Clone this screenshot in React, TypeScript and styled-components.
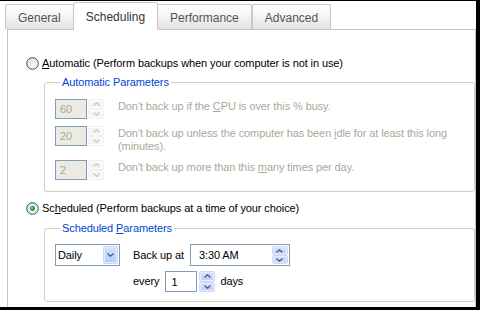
import React from "react";
import styled, { createGlobalStyle } from "styled-components";

const GlobalStyle = createGlobalStyle`
  html, body {
    margin: 0;
    padding: 0;
    background: #fff;
  }
  body {
    font-family: "Liberation Sans", Arial, sans-serif;
    font-size: 11px;
    letter-spacing: -0.1px;
    color: #000;
  }
`;

const Screen = styled.div`
  width: 480px;
  height: 310px;
  box-sizing: border-box;
  border-top: 1px solid #000;
  border-right: 4px solid #000;
  border-bottom: 3px solid #000;
  background: #fff;
  overflow: hidden;
`;

// Tabs
const TabStrip = styled.div`
  position: relative;
  z-index: 1;
  display: flex;
  align-items: flex-end;
  height: 28px;
  padding-left: 5px;
`;

const Tab = styled.div<{ $active?: boolean }>`
  box-sizing: border-box;
  display: flex;
  align-items: center;
  height: ${(p) => (p.$active ? 28 : 25)}px;
  margin: 0 ${(p) => (p.$active ? -1 : 0)}px ${(p) => (p.$active ? -1 : 0)}px;
  padding: ${(p) => (p.$active ? "0 12px" : "2px 12px 0")};
  font-size: 12px;
  letter-spacing: 0;
  color: ${(p) => (p.$active ? "#333" : "#555")};
  border: 1px solid #c8c8c8;
  border-bottom: none;
  border-radius: ${(p) => (p.$active ? "3px 3px 0 0" : "2px 2px 0 0")};
  background: ${(p) =>
    p.$active ? "#fff" : "linear-gradient(#ffffff 0%, #f4f4f4 45%, #e2e2e2 100%)"};
  z-index: ${(p) => (p.$active ? 2 : 1)};
  white-space: nowrap;
`;

const Panel = styled.div`
  box-sizing: border-box;
  margin-left: 7px;
  height: 300px;
  border: 1px solid #c5c5c5;
  background: #fff;
  padding: 27px 0 0 18px;
`;

// Radio options
const RadioRow = styled.label<{ $gap?: number }>`
  display: flex;
  align-items: center;
  height: 13px;
  margin-top: ${(p) => p.$gap ?? 0}px;
  white-space: nowrap;
`;

const RadioText = styled.span`
  margin-left: 3px;
  line-height: 13px;
`;

// Group boxes
const Group = styled.fieldset<{ $gap: number; $top: number; $bottom: number }>`
  box-sizing: border-box;
  width: 431px;
  margin: ${(p) => p.$gap}px 0 0 18px;
  padding: ${(p) => p.$top}px 0 ${(p) => p.$bottom}px 10px;
  border: 1px solid #d0d0bf;
  border-radius: 3px;
  min-width: 0;
`;

const Legend = styled.legend`
  margin-left: 5px;
  padding: 0 2px;
  color: #0046d5;
  font-size: 11px;
  line-height: 13px;
`;

const ParamRows = styled.div`
  display: flex;
  flex-direction: column;
  gap: 7px;
`;

const ParamRow = styled.div`
  display: flex;
  align-items: flex-start;
`;

const ParamText = styled.div`
  margin-left: 14px;
  padding-top: 1px;
  line-height: 13px;
  color: #aca899;
  white-space: nowrap;
`;

// Inputs
const Field = styled.div<{ $w: number; $h: number; $disabled?: boolean; $pad?: number }>`
  box-sizing: border-box;
  display: flex;
  align-items: center;
  justify-content: space-between;
  width: ${(p) => p.$w}px;
  height: ${(p) => p.$h}px;
  padding: 1px 1px 1px ${(p) => p.$pad ?? 4}px;
  border: 1px solid #7f9db9;
  background: ${(p) => (p.$disabled ? "#ebebe4" : "#fff")};
  color: ${(p) => (p.$disabled ? "#aca899" : "#000")};
  white-space: nowrap;
`;

const SpinStack = styled.div<{ $h: number; $gap?: number }>`
  display: flex;
  flex-direction: column;
  width: 16px;
  height: ${(p) => p.$h}px;
  margin-left: ${(p) => p.$gap ?? 0}px;
`;

const SpinHalf = styled.div<{ $disabled?: boolean }>`
  box-sizing: border-box;
  flex: 1;
  display: flex;
  align-items: center;
  justify-content: center;
  border: 1px solid ${(p) => (p.$disabled ? "#f0f0ea" : "#ccd9f8")};
  border-radius: 2px;
  background: ${(p) =>
    p.$disabled ? "#f4f4f0" : "linear-gradient(#d9e4fd, #bccff8)"};
  box-shadow: ${(p) => (p.$disabled ? "inset 0 0 0 1px #ffffff" : "inset 0 0 0 1px #e6edfd")};
`;

const DropButton = styled.div`
  box-sizing: border-box;
  display: flex;
  align-items: center;
  justify-content: center;
  width: 15px;
  height: 100%;
  border: 1px solid #c8d6fa;
  border-radius: 2px;
  background: linear-gradient(#d5e1fd, #b6caf6);
  box-shadow: inset 0 0 0 1px #e4ebfd;
`;

const ScheduleLayout = styled.div`
  display: flex;
  align-items: flex-start;
  height: 48px;
`;

const ScheduleColumn = styled.div`
  display: flex;
  flex-direction: column;
  gap: 5px;
  margin-left: 13px;
`;

const ScheduleRow = styled.div`
  display: flex;
  align-items: center;
`;

const Caption = styled.span<{ $left?: number; $right?: number }>`
  margin-left: ${(p) => p.$left ?? 0}px;
  margin-right: ${(p) => p.$right ?? 0}px;
  line-height: 13px;
  white-space: nowrap;
`;

const Arrow = ({ up, color }: { up?: boolean; color: string }) => (
  <svg width="7" height="4" viewBox="0 0 7 4" style={{ display: "block" }}>
    <path
      d={up ? "M0.5 3.5 L3.5 0.8 L6.5 3.5" : "M0.5 0.5 L3.5 3.2 L6.5 0.5"}
      fill="none"
      stroke={color}
      strokeWidth="1.4"
    />
  </svg>
);

const Spin = ({ h, disabled, gap }: { h: number; disabled?: boolean; gap?: number }) => {
  const c = disabled ? "#cfcdc3" : "#4d6185";
  return (
    <SpinStack $h={h} $gap={gap}>
      <SpinHalf $disabled={disabled}>
        <Arrow up color={c} />
      </SpinHalf>
      <SpinHalf $disabled={disabled}>
        <Arrow color={c} />
      </SpinHalf>
    </SpinStack>
  );
};

const Radio = ({ checked }: { checked?: boolean }) => (
  <svg width="13" height="13" viewBox="0 0 13 13" style={{ display: "block" }}>
    <defs>
      <linearGradient id={checked ? "rg1" : "rg0"} x1="0" y1="0" x2="1" y2="1">
        <stop offset="0" stopColor="#dcdcd7" />
        <stop offset="1" stopColor="#ffffff" />
      </linearGradient>
    </defs>
    <circle
      cx="6.5"
      cy="6.5"
      r="5.8"
      fill={`url(#${checked ? "rg1" : "rg0"})`}
      stroke="#1c5180"
      strokeWidth="1"
    />
    {checked && (
      <>
        <circle cx="6.5" cy="6.5" r="2.4" fill="#21a121" />
        <circle cx="6" cy="6" r="0.9" fill="#8fdc8f" />
      </>
    )}
  </svg>
);

const DisabledParam = ({ value, children }: { value: string; children: React.ReactNode }) => (
  <ParamRow>
    <Field $w={32} $h={20} $disabled>
      {value}
    </Field>
    <Spin h={20} disabled gap={1} />
    <ParamText>{children}</ParamText>
  </ParamRow>
);

export default function App() {
  return (
    <>
      <GlobalStyle />
      <Screen>
        <TabStrip>
          <Tab>General</Tab>
          <Tab $active>Scheduling</Tab>
          <Tab>Performance</Tab>
          <Tab>Advanced</Tab>
        </TabStrip>
        <Panel>
          <RadioRow>
            <Radio />
            <RadioText>
              <u>A</u>utomatic (Perform backups when your computer is not in use)
            </RadioText>
          </RadioRow>

          <Group $gap={6} $top={10} $bottom={11}>
            <Legend>Automatic Parameters</Legend>
            <ParamRows>
              <DisabledParam value="60">
                Don't back up if the <u>C</u>PU is over this % busy.
              </DisabledParam>
              <DisabledParam value="20">
                Don't back up unless the computer has been <u>i</u>dle for at least this long
                <br />
                (minutes).
              </DisabledParam>
              <DisabledParam value="2">
                Don't back up more than this <u>m</u>any times per day.
              </DisabledParam>
            </ParamRows>
          </Group>

          <RadioRow $gap={10}>
            <Radio checked />
            <RadioText>
              Sc<u>h</u>eduled (Perform backups at a time of your choice)
            </RadioText>
          </RadioRow>

          <Group $gap={7} $top={9} $bottom={9}>
            <Legend>
              Scheduled <u>P</u>arameters
            </Legend>
            <ScheduleLayout>
              <Field $w={65} $h={22} $pad={2}>
                <span>Daily</span>
                <DropButton>
                  <Arrow color="#4d6185" />
                </DropButton>
              </Field>
              <ScheduleColumn>
                <ScheduleRow>
                  <Caption $right={6}>Back up at</Caption>
                  <Field $w={100} $h={22} $pad={8}>
                    <span>3:30 AM</span>
                    <Spin h={18} />
                  </Field>
                </ScheduleRow>
                <ScheduleRow>
                  <Caption $right={6}>every</Caption>
                  <Field $w={32} $h={21} $pad={5}>
                    1
                  </Field>
                  <Spin h={21} gap={2} />
                  <Caption $left={5}>days</Caption>
                </ScheduleRow>
              </ScheduleColumn>
            </ScheduleLayout>
          </Group>
        </Panel>
      </Screen>
    </>
  );
}
